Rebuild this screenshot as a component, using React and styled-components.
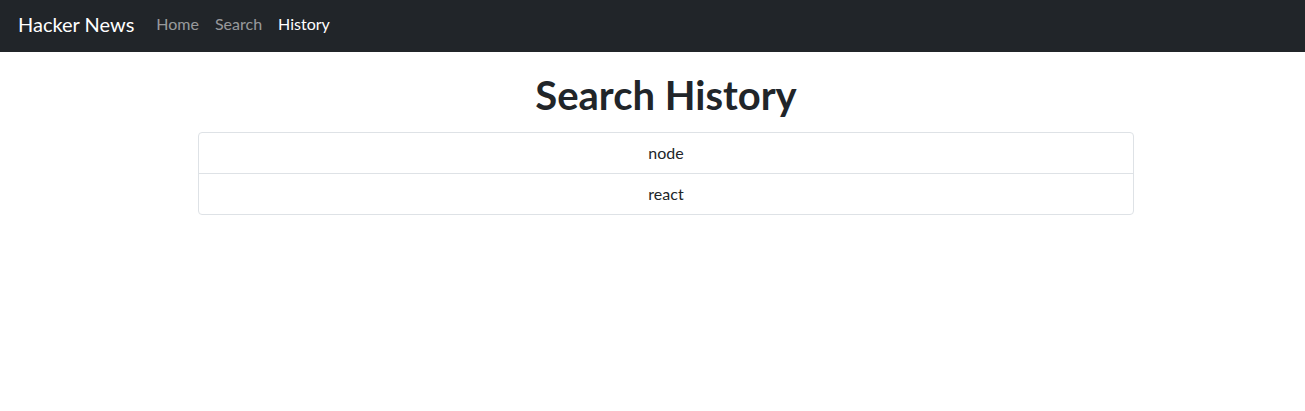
import React from "react";
import styled, { createGlobalStyle } from "styled-components";

const Global = createGlobalStyle`
  * { box-sizing: border-box; }
  body {
    margin: 0;
    font-family: Lato, "Noto Sans", sans-serif;
    font-size: 16px;
    line-height: 1.5;
    color: #212529;
    background: #fff;
  }
`;

const Navbar = styled.nav`
  height: 52px;
  background: #212529;
  display: flex;
  align-items: center;
  padding: 0 18px 4px;
`;

const Brand = styled.a`
  color: #fff;
  font-size: 20px;
  line-height: 30px;
  margin-right: 14px;
  text-decoration: none;
`;

const NavList = styled.div`
  display: flex;
  align-items: center;
`;

const NavLink = styled.a`
  padding: 0 8px;
  font-size: 16px;
  line-height: 24px;
  text-decoration: none;
  color: ${(p) => (p.$active ? "#fff" : "rgba(255,255,255,0.55)")};
`;

const Page = styled.div`
  padding-left: 27px;
`;

const Container = styled.main`
  width: 936px;
  margin: 0 auto;
  display: flex;
  flex-direction: column;
  align-items: stretch;
`;

const Title = styled.h1`
  margin: 19px 0 13px;
  font-size: 40px;
  font-weight: 700;
  line-height: 48px;
  text-align: center;
`;

const ListGroup = styled.ul`
  list-style: none;
  margin: 0;
  padding: 0;
  border: 1px solid #dee2e6;
  border-radius: 4px;
`;

const ListItem = styled.li`
  padding: 8px 16px;
  text-align: center;
  line-height: 24px;
  & + & {
    border-top: 1px solid #dee2e6;
  }
`;

export default function App() {
  const items = ["node", "react"];
  return (
    <>
      <Global />
      <Navbar>
        <Brand href="#">Hacker News</Brand>
        <NavList>
          <NavLink href="#">Home</NavLink>
          <NavLink href="#">Search</NavLink>
          <NavLink href="#" $active>History</NavLink>
        </NavList>
      </Navbar>
      <Page>
        <Container>
          <Title>Search History</Title>
          <ListGroup>
            {items.map((t) => (
              <ListItem key={t}>{t}</ListItem>
            ))}
          </ListGroup>
        </Container>
      </Page>
    </>
  );
}
